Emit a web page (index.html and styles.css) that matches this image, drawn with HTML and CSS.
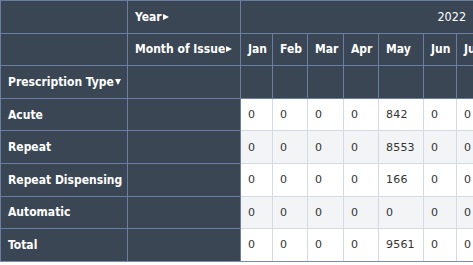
FILE: index.html
```html
<!DOCTYPE html>
<html>
<head>
<meta charset="utf-8">
<link rel="stylesheet" href="styles.css">
</head>
<body>
<div class="wrap">
<table class="pivot">
  <colgroup>
    <col class="c-row"><col class="c-row2">
    <col class="c-jan"><col class="c-feb"><col class="c-mar"><col class="c-apr"><col class="c-may"><col class="c-jun"><col class="c-jul">
  </colgroup>
  <tr class="hdr">
    <th class="h"></th>
    <th class="h">Year<span class="arr-r"></span></th>
    <th class="h year" colspan="7">2022</th>
  </tr>
  <tr class="hdr">
    <th class="h"></th>
    <th class="h">Month of Issue<span class="arr-r"></span></th>
    <th class="h">Jan</th><th class="h">Feb</th><th class="h">Mar</th><th class="h">Apr</th><th class="h">May</th><th class="h">Jun</th><th class="h">Jul</th>
  </tr>
  <tr class="hdr">
    <th class="h">Prescription Type<span class="arr-d"></span></th>
    <th class="h"></th>
    <th class="h"></th><th class="h"></th><th class="h"></th><th class="h"></th><th class="h"></th><th class="h"></th><th class="h"></th>
  </tr>
  <tr class="row">
    <th class="h">Acute</th><th class="h"></th>
    <td>0</td><td>0</td><td>0</td><td>0</td><td>842</td><td>0</td><td>0</td>
  </tr>
  <tr class="row alt">
    <th class="h">Repeat</th><th class="h"></th>
    <td>0</td><td>0</td><td>0</td><td>0</td><td>8553</td><td>0</td><td>0</td>
  </tr>
  <tr class="row">
    <th class="h">Repeat Dispensing</th><th class="h"></th>
    <td>0</td><td>0</td><td>0</td><td>0</td><td>166</td><td>0</td><td>0</td>
  </tr>
  <tr class="row alt">
    <th class="h">Automatic</th><th class="h"></th>
    <td>0</td><td>0</td><td>0</td><td>0</td><td>0</td><td>0</td><td>0</td>
  </tr>
  <tr class="row last">
    <th class="h">Total</th><th class="h"></th>
    <td>0</td><td>0</td><td>0</td><td>0</td><td>9561</td><td>0</td><td>0</td>
  </tr>
</table>
</div>
</body>
</html>
```

FILE: styles.css
```css
html, body {
  margin: 0;
  padding: 0;
  background: #ffffff;
  overflow: hidden;
}
.wrap {
  width: 473px;
  overflow: hidden;
}
.pivot {
  border-collapse: collapse;
  table-layout: fixed;
  width: 500px;
  font-family: "DejaVu Sans Condensed", "DejaVu Sans", Verdana, sans-serif;
  font-stretch: condensed;
  font-size: 12px;
  border-top: 1px solid #9a9ea4;
}
.c-row { width: 127px; }
.c-row2 { width: 113px; }
.c-jan { width: 32px; }
.c-feb { width: 35px; }
.c-mar { width: 36px; }
.c-apr { width: 35px; }
.c-may { width: 45px; }
.c-jun { width: 33px; }
.c-jul { width: 44px; }
.pivot th, .pivot td {
  height: 32.6px;
  padding: 0 0 0 7px;
  text-align: left;
  vertical-align: middle;
  white-space: nowrap;
  overflow: hidden;
  box-sizing: border-box;
}
.pivot th.h {
  background: #3a4654;
  color: #ffffff;
  font-weight: bold;
  border: 1px solid #6a7ea3;
}
.pivot th.year {
  text-align: right;
  padding-right: 34px;
  font-weight: normal;
  font-size: 12.5px;
}
.arr-r {
  display: inline-block;
  width: 0;
  height: 0;
  border-left: 6px solid #ffffff;
  border-top: 3px solid transparent;
  border-bottom: 3px solid transparent;
  margin-left: 1px;
  vertical-align: 1px;
}
.arr-d {
  display: inline-block;
  width: 0;
  height: 0;
  border-top: 6px solid #ffffff;
  border-left: 3px solid transparent;
  border-right: 3px solid transparent;
  margin-left: 1px;
  vertical-align: 1px;
}
.pivot td {
  background: #ffffff;
  color: #333333;
  border: 1px solid #d3dae4;
  font-family: "DejaVu Sans", Verdana, sans-serif;
  font-stretch: normal;
  font-size: 11px;
  letter-spacing: 0.2px;
}
.row.alt td {
  background: #f2f4f6;
}
.row.last td, .row.last th {
  border-bottom: 1px solid #7b8cab;
}
.pivot tr.row td:first-of-type {
  border-left: 1px solid #6a7ea3;
}
```
